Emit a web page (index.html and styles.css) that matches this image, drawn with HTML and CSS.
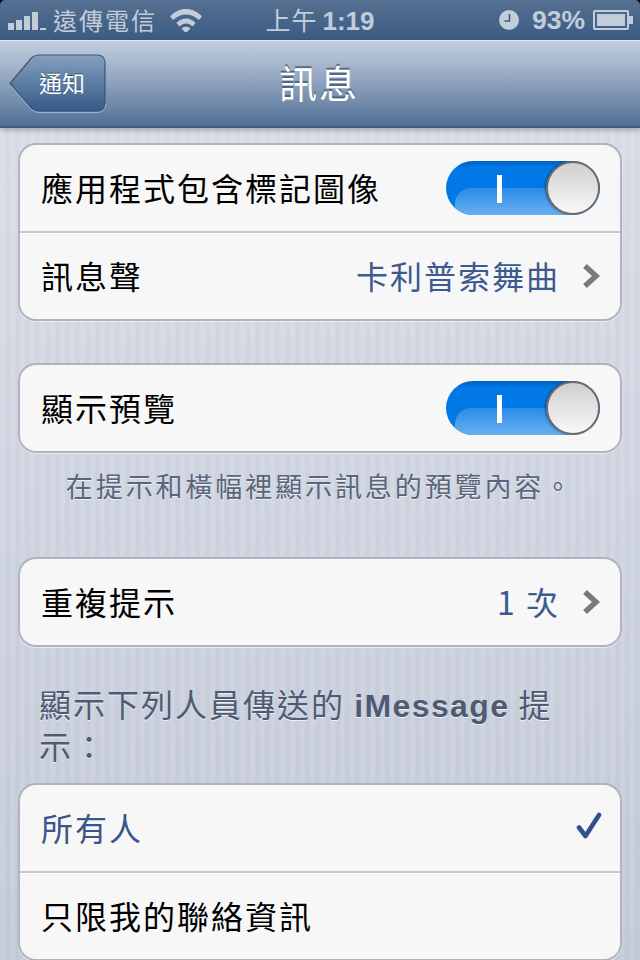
FILE: index.html
```html
<!DOCTYPE html>
<html lang="zh-Hant">
  <head>
    <meta charset="UTF-8">
    <meta name="viewport" content="width=device-width, initial-scale=1.0">
    <title>訊息</title>
    <link rel="stylesheet" href="styles.css">
  </head>
  <body>
    <!-- Status bar -->
    <div class="statusbar">
      <div class="status-left">
        <div class="signal">
          <span class="bar bar1"></span>
          <span class="bar bar2"></span>
          <span class="bar bar3"></span>
          <span class="bar bar4"></span>
          <span class="bar bar5"></span>
        </div>
        <span class="carrier">遠傳電信</span>
        <svg class="wifi" width="32" height="24" viewBox="0 0 32 24">
          <path d="M0 8.5C8.5 -1.5 23.5 -1.5 32 8.5L28.8 12C22 4.5 10 4.5 3.2 12Z" fill="#c3ccd9"/>
          <path d="M6.4 15C11.5 9 20.5 9 25.6 15L22.4 18.4C18.8 14.4 13.2 14.4 9.6 18.4Z" fill="#c3ccd9"/>
          <path d="M11.5 20.6C14 18 18 18 20.5 20.6L16 25Z" fill="#c3ccd9"/>
        </svg>
      </div>
      <div class="clock"><span class="ampm">上午</span>1:19</div>
      <div class="status-right">
        <svg class="alarm" width="20" height="20" viewBox="0 0 20 20">
          <circle cx="10" cy="10" r="10" fill="#c3ccd9"/>
          <path d="M10.5 4V11H5.5" fill="none" stroke="#3f5c82" stroke-width="1.6"/>
        </svg>
        <span class="percent">93%</span>
        <div class="battery">
          <div class="battery-body"><div class="battery-fill"></div></div>
          <div class="battery-tip"></div>
        </div>
      </div>
    </div>

    <!-- Nav bar -->
    <div class="navbar">
      <div class="back">
        <svg class="back-shape" width="98" height="60" viewBox="0 0 98 60">
          <defs>
            <linearGradient id="backFill" x1="0" y1="0" x2="0" y2="1">
              <stop offset="0" stop-color="#84a0bf"/>
              <stop offset="1" stop-color="#365a87"/>
            </linearGradient>
          </defs>
          <path d="M1 29.5L22 4.5Q25.5 1 30 1H88Q96 1 96 9V49Q96 57 88 57H30Q25.5 57 22 53.5Z" fill="url(#backFill)" stroke="#3f5572" stroke-width="1.2"/>
          <path d="M1 31L22 55.5Q25.5 58.5 30 58.5H88Q96 58.5 97 50" fill="none" stroke="#9fb2c9" stroke-width="1"/>
        </svg>
        <span class="back-label">通知</span>
      </div>
      <h1 class="title">訊息</h1>
    </div>

    <!-- Settings -->
    <div class="content">
      <div class="group">
        <div class="row">
          <span class="label">應用程式包含標記圖像</span>
          <div class="switch">
            <div class="gloss"></div>
            <div class="on-mark"></div>
            <div class="knob"></div>
          </div>
        </div>
        <div class="row">
          <span class="label">訊息聲</span>
          <span class="value">卡利普索舞曲</span>
          <svg class="chevron" width="18" height="26" viewBox="0 0 18 26"><path d="M3 3L14 13L3 23" fill="none" stroke="#7a7a7a" stroke-width="5.5"/></svg>
        </div>
      </div>

      <div class="group group-gap">
        <div class="row">
          <span class="label">顯示預覽</span>
          <div class="switch">
            <div class="gloss"></div>
            <div class="on-mark"></div>
            <div class="knob"></div>
          </div>
        </div>
      </div>
      <p class="footnote">在提示和橫幅裡顯示訊息的預覽內容。</p>

      <div class="group group-after-note">
        <div class="row">
          <span class="label">重複提示</span>
          <span class="value">1 次</span>
          <svg class="chevron" width="18" height="26" viewBox="0 0 18 26"><path d="M3 3L14 13L3 23" fill="none" stroke="#7a7a7a" stroke-width="5.5"/></svg>
        </div>
      </div>

      <p class="section-title">顯示下列人員傳送的 <b>iMessage</b> 提示：</p>

      <div class="group">
        <div class="row">
          <span class="label label-selected">所有人</span>
          <svg class="check" width="26" height="28" viewBox="0 0 26 28"><path d="M3 15.5L9.5 24L23 3" fill="none" stroke="#2f5288" stroke-width="4.6" stroke-linecap="round" stroke-linejoin="round"/></svg>
        </div>
        <div class="row">
          <span class="label">只限我的聯絡資訊</span>
        </div>
      </div>
    </div>
  </body>
</html>
```

FILE: styles.css
```css
html, body {
  margin: 0;
  padding: 0;
  height: 960px;
  overflow: hidden;
  background-color: #000;
}
body {
  font-family: "Noto Sans CJK TC", "Liberation Sans", sans-serif;
  color: #000;
}

/* Status bar */
.statusbar {
  height: 40px;
  padding: 0 7px 0 8px;
  display: flex;
  align-items: center;
  justify-content: space-between;
  position: relative;
  color: #c3ccd9;
  background: linear-gradient(#557091, #3b5b83);
  border-radius: 5px 5px 0 0;
  border-bottom: 1px solid #f1f3f6;
}
.status-left, .status-right {
  display: flex;
  align-items: center;
}
.signal {
  display: flex;
  align-items: flex-end;
  gap: 2px;
  height: 20px;
}
.bar {
  width: 6px;
  background-color: #c3ccd9;
}
.bar1 { height: 7px; }
.bar2 { height: 10px; }
.bar3 { height: 14px; }
.bar4 { height: 18px; }
.bar5 { height: 2px; }
.carrier {
  margin-left: 7px;
  font-size: 24px;
  letter-spacing: 2px;
  line-height: 40px;
}
.wifi {
  margin-left: 13px;
}
.clock {
  position: absolute;
  left: 0;
  right: 0;
  text-align: center;
  font-size: 26px;
  line-height: 40px;
  font-family: "Liberation Sans", sans-serif;
  font-weight: bold;
}
.ampm {
  font-family: "Noto Sans CJK TC", sans-serif;
  font-size: 25px;
  font-weight: normal;
  letter-spacing: 1px;
  margin-right: 5px;
}
.alarm {
  margin-right: 13px;
}
.percent {
  font-family: "Liberation Sans", sans-serif;
  font-size: 26.5px;
  font-weight: bold;
  margin-right: 8px;
}
.battery {
  display: flex;
  align-items: center;
}
.battery-body {
  box-sizing: border-box;
  width: 36px;
  height: 20px;
  padding: 2px;
  border: 2px solid #c3ccd9;
  border-radius: 2px;
}
.battery-fill {
  width: 100%;
  height: 100%;
  background-color: #c3ccd9;
}
.battery-tip {
  width: 4px;
  height: 8px;
  background-color: #c3ccd9;
}

/* Nav bar */
.navbar {
  height: 85px;
  position: relative;
  display: flex;
  align-items: center;
  justify-content: center;
  background: linear-gradient(#c1cfdf, #a3b4cb 30%, #6f89a9 75%, #4f6f96);
  border-bottom: 2px solid #3d5878;
  box-shadow: 0 2px 5px rgba(40, 50, 70, 0.35);
  z-index: 1;
}
.back {
  position: absolute;
  left: 9px;
  top: 13px;
  width: 98px;
  height: 60px;
}
.back-shape {
  display: block;
}
.back-label {
  position: absolute;
  left: 30px;
  top: 0;
  line-height: 57px;
  font-size: 23px;
  color: #fff;
  text-shadow: 0 -1px 0 rgba(40, 60, 90, 0.7);
}
.title {
  margin: 0 2px 4px 0;
  font-size: 38px;
  font-weight: normal;
  letter-spacing: 2px;
  line-height: 80px;
  color: #fff;
  text-shadow: 0 -2px 0 rgba(60, 75, 100, 0.7);
}

/* Settings */
.content {
  height: 832px;
  padding: 15px 18px 0;
  overflow: hidden;
  background:
    repeating-linear-gradient(90deg, rgba(255, 255, 255, 0.07) 0 5px, rgba(120, 130, 150, 0.03) 5px 10px),
    linear-gradient(#d9dde7, #c3cad8);
}
.group {
  background-color: #f7f7f7;
  border: 2px solid #b0b4bf;
  border-radius: 18px;
  box-shadow: 0 1px 0 #e8ebf0;
  overflow: hidden;
}
.group-gap {
  margin-top: 42px;
}
.group-after-note {
  margin-top: 51px;
}
.row {
  height: 86px;
  padding: 0 20px 0 21px;
  display: flex;
  align-items: center;
  font-size: 32px;
  letter-spacing: 2px;
}
.row + .row {
  border-top: 2px solid #c8c8c8;
  box-shadow: inset 0 1px 0 #fff;
}
.label {
  flex: 1;
  margin-bottom: 2px;
  color: #000;
}
.label-selected {
  color: #3a5688;
}
.value {
  margin-bottom: 2px;
  margin-right: 22px;
  color: #3d5a8e;
}
.chevron {
  flex-shrink: 0;
}
.check {
  margin: 0 -2px 4px 0;
}

/* Toggle switch */
.switch {
  position: relative;
  width: 154px;
  height: 54px;
  border-radius: 27px;
  overflow: hidden;
  background: linear-gradient(#0060c0, #0078e6 12%);
}
.gloss {
  position: absolute;
  left: 9px;
  right: 0;
  top: 27px;
  height: 30px;
  border-radius: 16px 0 0 0;
  background: linear-gradient(#2a8ce8, #6fb3ef);
}
.on-mark {
  position: absolute;
  left: 51px;
  top: 14px;
  width: 5px;
  height: 28px;
  background-color: #fff;
}
.knob {
  position: absolute;
  right: 0;
  top: 0;
  width: 50px;
  height: 50px;
  border: 2px solid #6b6b6b;
  border-radius: 50%;
  background: linear-gradient(#cfcfcf, #f8f8f8);
  box-shadow: -1px 0 2px rgba(0, 0, 0, 0.4);
}

/* Group captions */
.footnote {
  margin: 13px 0 0;
  text-align: center;
  font-size: 27px;
  line-height: 40px;
  letter-spacing: 2.9px;
  color: #59657a;
  text-shadow: 0 1px 0 #eef0f5;
}
.section-title {
  margin: 35px 21px 17px;
  font-size: 32px;
  line-height: 42px;
  letter-spacing: 2px;
  color: #4f5b72;
  text-shadow: 0 1px 0 #eef0f5;
}
.section-title b {
  font-family: "Liberation Sans", sans-serif;
  line-height: 1;
  letter-spacing: 1.4px;
}
```
